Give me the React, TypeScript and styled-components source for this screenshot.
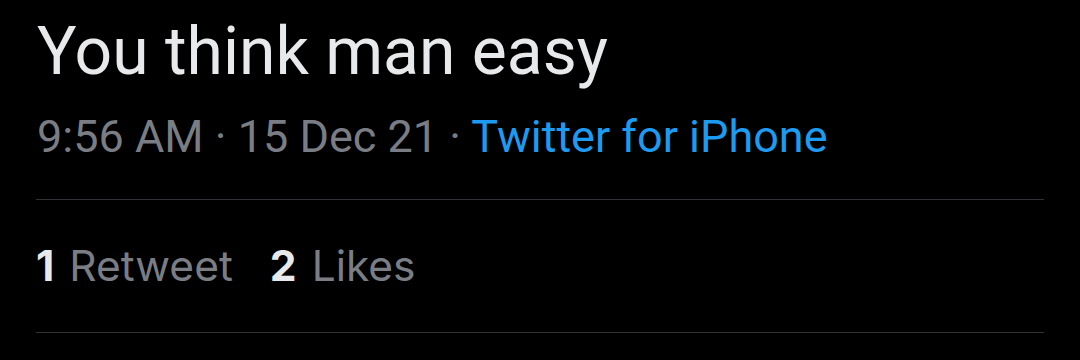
import React from 'react';
import styled, { createGlobalStyle } from 'styled-components';

const GlobalStyle = createGlobalStyle`
    html, body {
        margin: 0;
        padding: 0;
        background: #000;
    }
`;

const TweetDetailBox = styled.div`
    width: 1080px;
    height: 360px;
    background: #000;
    padding: 0 36px;
    box-sizing: border-box;
    overflow: hidden;
`;

const TweetText = styled.div`
    font-family: Roboto, 'Liberation Sans', sans-serif;
    font-size: 66px;
    line-height: 80px;
    color: #e7e9ea;
    padding-top: 12px;
    padding-left: 1px;
`;

const MetaLine = styled.div`
    font-family: Roboto, 'Liberation Sans', sans-serif;
    font-size: 45px;
    line-height: 54px;
    color: #7a7e84;
    margin-top: 18px;
    padding-left: 1px;
    padding-bottom: 35px;
    border-bottom: 1px solid #2f3336;
    white-space: nowrap;
`;

const SourceLink = styled.span`
    color: #1d9bf0;
`;

const StatsRow = styled.div`
    display: flex;
    gap: 37px;
    font-family: Inter, 'Liberation Sans', sans-serif;
    font-size: 42.5px;
    line-height: 132px;
    height: 132px;
    border-bottom: 1px solid #2f3336;
`;

const Stat = styled.span`
    color: #7a7e84;
    b {
        color: #e7e9ea;
        font-weight: 700;
        margin-right: 15px;
    }
`;

const App = () => {
    const stats = [
        { count: 1, label: 'Retweet' },
        { count: 2, label: 'Likes' },
    ];

    return (
        <>
            <GlobalStyle />
            <TweetDetailBox>
                <TweetText>You think man easy</TweetText>
                <MetaLine>
                    9:56 AM · 15 Dec 21 · <SourceLink>Twitter for iPhone</SourceLink>
                </MetaLine>
                <StatsRow>
                    {stats.map(s => (
                        <Stat key={s.label}>
                            <b>{s.count}</b>
                            {s.label}
                        </Stat>
                    ))}
                </StatsRow>
            </TweetDetailBox>
        </>
    );
};

export default App;
